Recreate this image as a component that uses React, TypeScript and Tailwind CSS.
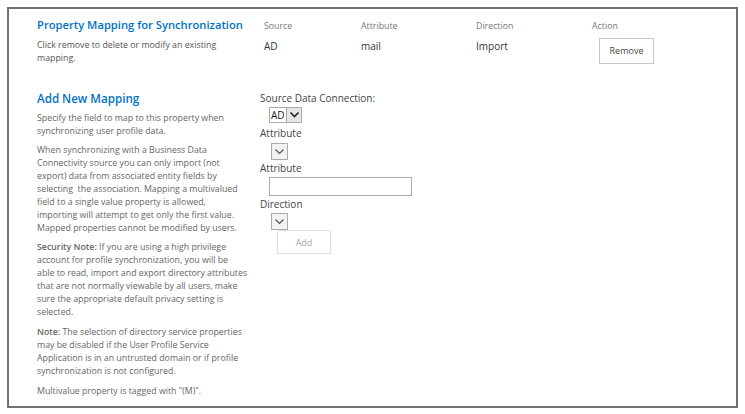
import React from "react";

const font = { fontFamily: '"Open Sans", "Noto Sans", sans-serif' };

function Chevron() {
  return (
    <svg width="11" height="8" viewBox="0 0 11 8">
      <path d="M1.5 1.5 L5.5 5.5 L9.5 1.5" fill="none" stroke="#222" strokeWidth="1.6" />
    </svg>
  );
}

function LightChevron() {
  return (
    <svg width="11" height="8" viewBox="0 0 11 8">
      <path d="M1.5 1.5 L5.5 5.5 L9.5 1.5" fill="none" stroke="#555" strokeWidth="1.2" />
    </svg>
  );
}

function EmptySelect() {
  return (
    <div className="ml-[11px] flex h-[17px] w-[17px] items-center justify-center border border-[#ababab] bg-[#f3f3f3]">
      <LightChevron />
    </div>
  );
}

function Lines({ lines }: { lines: React.ReactNode[] }) {
  return (
    <>
      {lines.map((l, i) => (
        <div key={i} className="whitespace-nowrap">
          {l}
        </div>
      ))}
    </>
  );
}

export default function App() {
  return (
    <div className="h-[414px] w-[745px] overflow-hidden bg-white" style={font}>
      <div className="ml-[7px] pt-[7px]">
        <div className="h-[401px] w-[731px] border-2 border-[#707070] pl-[28px] pt-[7px]">
          {/* Section 1 */}
          <div className="flex">
            <div className="w-[223px]">
              <div className="whitespace-nowrap text-[11.2px] font-semibold leading-[18px] text-[#0072c6]">
                Property Mapping for Synchronization
              </div>
              <div className="mt-[5px] text-[8.8px] leading-[13px] text-[#555]">
                <Lines lines={["Click remove to delete or modify an existing", "mapping."]} />
              </div>
            </div>
            <div className="pl-[4px] pt-[3px]">
              <div className="flex text-[8.8px] leading-[14px] text-[#777]">
                <div className="w-[97px]">Source</div>
                <div className="w-[115px]">Attribute</div>
                <div className="w-[116px]">Direction</div>
                <div>Action</div>
              </div>
              <div className="mt-[6px] flex text-[10px] leading-[14px] text-[#333]">
                <div className="w-[97px]">AD</div>
                <div className="w-[115px]">mail</div>
                <div className="w-[116px]">Import</div>
                <div className="pl-[7px]">
                  <div className="-mt-[1px] flex h-[26px] w-[55px] items-center justify-center border border-[#c8c8c8] text-[9px] text-[#444]">
                    Remove
                  </div>
                </div>
              </div>
            </div>
          </div>

          {/* Section 2 */}
          <div className="mt-[25px] flex">
            <div className="w-[223px] text-[8.8px] leading-[13px] text-[#666]">
              <div className="text-[11.6px] font-semibold leading-[18px] text-[#0072c6]">
                Add New Mapping
              </div>
              <div className="mt-[4px]">
                <Lines
                  lines={[
                    "Specify the field to map to this property when",
                    "synchronizing user profile data.",
                  ]}
                />
              </div>
              <div className="mt-[6px]">
                <Lines
                  lines={[
                    "When synchronizing with a Business Data",
                    "Connectivity source you can only import (not",
                    "export) data from associated entity fields by",
                    "selecting\u00a0 the association. Mapping a multivalued",
                    "field to a single value property is allowed,",
                    "importing will attempt to get only the first value.",
                    "Mapped properties cannot be modified by users.",
                  ]}
                />
              </div>
              <div className="mt-[6px]">
                <Lines
                  lines={[
                    <>
                      <span className="font-semibold">Security Note:</span> If you are using a high privilege
                    </>,
                    "account for profile synchronization, you will be",
                    "able to read, import and export directory attributes",
                    "that are not normally viewable by all users, make",
                    "sure the appropriate default privacy setting is",
                    "selected.",
                  ]}
                />
              </div>
              <div className="mt-[7px]">
                <Lines
                  lines={[
                    <>
                      <span className="font-semibold">Note:</span> The selection of directory service properties
                    </>,
                    "may be disabled if the User Profile Service",
                    "Application is in an untrusted domain or if profile",
                    "synchronization is not configured.",
                  ]}
                />
              </div>
              <div className="mt-[7px] whitespace-nowrap">Multivalue property is tagged with "(M)".</div>
            </div>
            <div className="pt-[1px] text-[10px] leading-[15px] text-[#444]">
              <div>Source Data Connection:</div>
              <div className="ml-[9px] mt-[1px] flex h-[16px] w-[33px] border border-[#ababab]">
                <div className="flex flex-1 items-center pl-[1px] text-[10px] leading-[14px] text-[#222]">AD</div>
                <div className="flex w-[15px] items-center justify-center border-l border-[#ababab] bg-[#e6e6e6]">
                  <Chevron />
                </div>
              </div>
              <div className="mt-[3px]">Attribute</div>
              <div className="mt-[2px]">
                <EmptySelect />
              </div>
              <div className="mt-[1px]">Attribute</div>
              <div className="ml-[9px] mt-[1px] h-[19px] w-[143px] border border-[#ababab] bg-white" />
              <div className="mt-[1px]">Direction</div>
              <div className="mt-[1px]">
                <EmptySelect />
              </div>
              <div className="ml-[17px] flex h-[24px] w-[54px] items-center justify-center border border-[#e0e0e0] text-[9px] text-[#aaa]">
                Add
              </div>
            </div>
          </div>
        </div>
      </div>
    </div>
  );
}
